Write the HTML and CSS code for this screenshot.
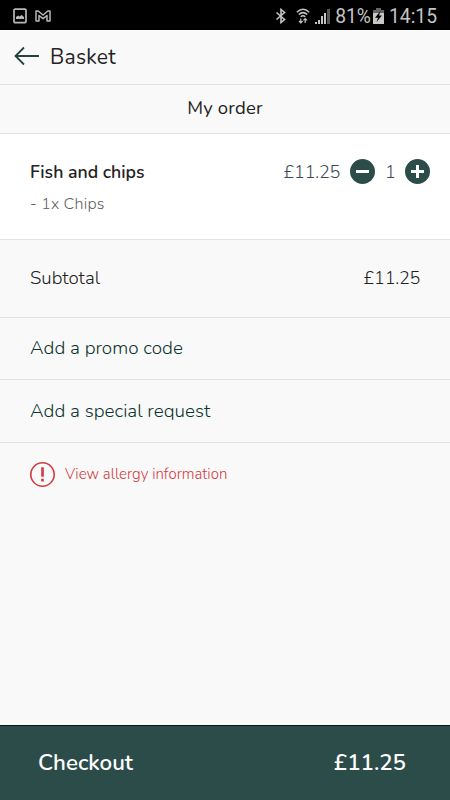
FILE: index.html
```html
<!DOCTYPE html>
<html lang="en">
<head>
    <meta charset="UTF-8">
    <meta name="viewport" content="width=device-width, initial-scale=1.0">
    <title>Basket</title>
    <link rel="stylesheet" href="styles.css">
</head>
<body>
    <div class="status-bar">
        <div class="status-left">
            <svg width="14" height="16" viewBox="0 0 14 16">
                <rect x="1" y="1.2" width="12" height="13.4" rx="1" fill="none" stroke="#b8b8b8" stroke-width="1.7"/>
                <path d="M3 11V9l2-1.6 1.4 1L8.6 7 11 9v2z" fill="#b8b8b8"/>
            </svg>
            <svg width="16" height="12" viewBox="0 0 16 12">
                <path d="M1 11V1h2.2L8 5l4.8-4H15v10h-3V5.5L8 8.7 4 5.5V11z" fill="none" stroke="#b8b8b8" stroke-width="1.5" stroke-linejoin="round"/>
            </svg>
        </div>
        <div class="status-right">
            <svg class="bluetooth" width="12" height="16" viewBox="0 0 12 16">
                <path d="M1.5 4.5l8 7L6 14.5v-13l3.5 3-8 7" fill="none" stroke="#c4c4c4" stroke-width="1.6"/>
            </svg>
            <svg class="wifi" width="14" height="16" viewBox="0 0 14 16">
                <path d="M.8 4.2Q7-1.6 13.2 4.2M2.7 6.5Q7 2.7 11.3 6.5M4.7 8.8Q7 6.8 9.3 8.8" fill="none" stroke="#c4c4c4" stroke-width="1.5"/>
                <path d="M4.8 10.5v4M3 13l1.8 1.8L6.6 13M9.2 15v-4M7.4 12.3l1.8-1.8 1.8 1.8" fill="none" stroke="#c4c4c4" stroke-width="1.2"/>
            </svg>
            <svg class="signal" width="15" height="15" viewBox="0 0 15 15">
                <path d="M0 13h2v2H0zM3 11h2v4H3zM6 7h2v8H6zM9 4h2v11H9z" fill="#c4c4c4"/>
                <path d="M12 0h3v15h-3z" fill="#555"/>
            </svg>
            <span class="percent">81%</span>
            <svg class="battery" width="11" height="16" viewBox="0 0 11 16">
                <path d="M3 0h5v2h3v14H0V2h3z" fill="#666"/>
                <path d="M0 5h11v11H0z" fill="#c8c8c8"/>
                <path d="M7.5 3L2 9.8h3L3.5 14 9 7.6H6z" fill="#000"/>
            </svg>
            <span class="clock">14:15</span>
        </div>
    </div>

    <header>
        <svg class="back" width="26" height="20" viewBox="0 0 26 20">
            <path d="M10 1.5L1.5 10l8.5 8.5M1.5 10H25" fill="none" stroke="#24453f" stroke-width="1.8"/>
        </svg>
        <h1>Basket</h1>
    </header>

    <h2>My order</h2>

    <div class="item">
        <div class="item-row">
            <span class="item-name">Fish and chips</span>
            <span class="item-price">£11.25</span>
            <button type="button" aria-label="Remove one">
                <svg width="25" height="25" viewBox="0 0 25 25">
                    <circle cx="12.5" cy="12.5" r="12.5" fill="#2b4c48"/>
                    <path d="M6 12.5h13" stroke="#fff" stroke-width="3"/>
                </svg>
            </button>
            <span class="quantity">1</span>
            <button type="button" aria-label="Add one">
                <svg width="25" height="25" viewBox="0 0 25 25">
                    <circle cx="12.5" cy="12.5" r="12.5" fill="#2b4c48"/>
                    <path d="M6 12.5h13M12.5 6v13" stroke="#fff" stroke-width="3"/>
                </svg>
            </button>
        </div>
        <p class="item-extra">- 1x Chips</p>
    </div>

    <div class="subtotal">
        <span class="subtotal-label">Subtotal</span>
        <span class="subtotal-price">£11.25</span>
    </div>

    <div class="link-row promo">Add a promo code</div>
    <div class="link-row request">Add a special request</div>

    <div class="allergy">
        <svg width="25" height="25" viewBox="0 0 25 25">
            <circle cx="12.5" cy="12.5" r="11.7" fill="none" stroke="#d33a3f" stroke-width="1.6"/>
            <path d="M12.5 5.3v9.5M12.5 16.8v2.6" stroke="#d33a3f" stroke-width="2.6"/>
        </svg>
        <span class="allergy-text">View allergy information</span>
    </div>

    <footer>
        <span class="checkout">Checkout</span>
        <span class="total">£11.25</span>
    </footer>
</body>
</html>
```
FILE: styles.css
```css
* {
    margin: 0;
    padding: 0;
    box-sizing: border-box;
}

body {
    background: #f9f9f9;
    color: #222;
    display: flex;
    flex-direction: column;
    height: 100vh;
    font-family: Nunito, "Open Sans", sans-serif;
    font-size: 18px;
    font-weight: 300;
    white-space: nowrap;
}

svg {
    display: block;
    flex: none;
}

/* Status bar */
.status-bar {
    height: 30px;
    background: #000;
    color: #c4c4c4;
    display: flex;
    justify-content: space-between;
    align-items: center;
    padding: 2px 13px 0;
    font-family: Roboto, sans-serif;
    font-size: 19.3px;
    font-weight: 400;
}

.status-left,
.status-right {
    display: flex;
    align-items: center;
}

.status-left {
    gap: 8px;
}

.wifi {
    margin-left: 9px;
}

.signal {
    margin-left: 5px;
}

.percent {
    margin-left: 5px;
}

.battery {
    margin-left: 2px;
}

.clock {
    margin-left: 5px;
}

/* Header */
header {
    height: 55px;
    border-bottom: 1px solid #e2e2e2;
    display: flex;
    align-items: center;
    padding: 0 14px;
}

.back {
    margin-bottom: 3px;
}

h1 {
    margin: -1px 0 0 10px;
    font-size: 21px;
    font-weight: 400;
    letter-spacing: 0.3px;
}

h2 {
    height: 49px;
    line-height: 47px;
    border-bottom: 1px solid #e2e2e2;
    text-align: center;
    font-size: 18.5px;
    font-weight: 400;
    letter-spacing: 0.2px;
}

/* Order item */
.item {
    height: 106px;
    padding: 25px 20px 0 30px;
    background: #fff;
    border-bottom: 1px solid #e2e2e2;
}

.item-row {
    display: flex;
    align-items: center;
    height: 25px;
    gap: 10px;
}

.item-name {
    flex: 1;
    font-weight: 600;
    font-size: 17.7px;
}

.item-price,
.quantity {
    color: #3c4856;
    letter-spacing: -0.25px;
}

.quantity {
    width: 10px;
    text-align: center;
}

.item-row button {
    border: 0;
    background: none;
}

.item-extra {
    margin-top: 9px;
    font-size: 16px;
    letter-spacing: 0.2px;
    line-height: 22px;
    color: #5f5f5f;
}

.subtotal {
    height: 78px;
    border-bottom: 1px solid #e2e2e2;
    display: flex;
    justify-content: space-between;
    align-items: center;
    padding: 0 30px 1px;
}

.subtotal-label {
    font-size: 18.7px;
}

.subtotal-price {
    letter-spacing: -0.25px;
}

.link-row {
    height: 62px;
    line-height: 61px;
    padding-left: 30px;
    border-bottom: 1px solid #e2e2e2;
    color: #0c3530;
    font-size: 18.9px;
}

.request {
    height: 63px;
    line-height: 62px;
}

.allergy {
    display: flex;
    align-items: center;
    gap: 10px;
    padding: 19px 30px;
    color: #d33a3f;
    font-size: 15px;
}

.allergy-text {
    margin-top: -2px;
}

/* Checkout bar */
footer {
    height: 75px;
    margin-top: auto;
    background: #2c4c49;
    border-top: 1px solid #001a14;
    color: #fff;
    display: flex;
    justify-content: space-between;
    align-items: center;
    padding: 0 44px 2px 38px;
    font-size: 22.3px;
    font-weight: 600;
}
```
